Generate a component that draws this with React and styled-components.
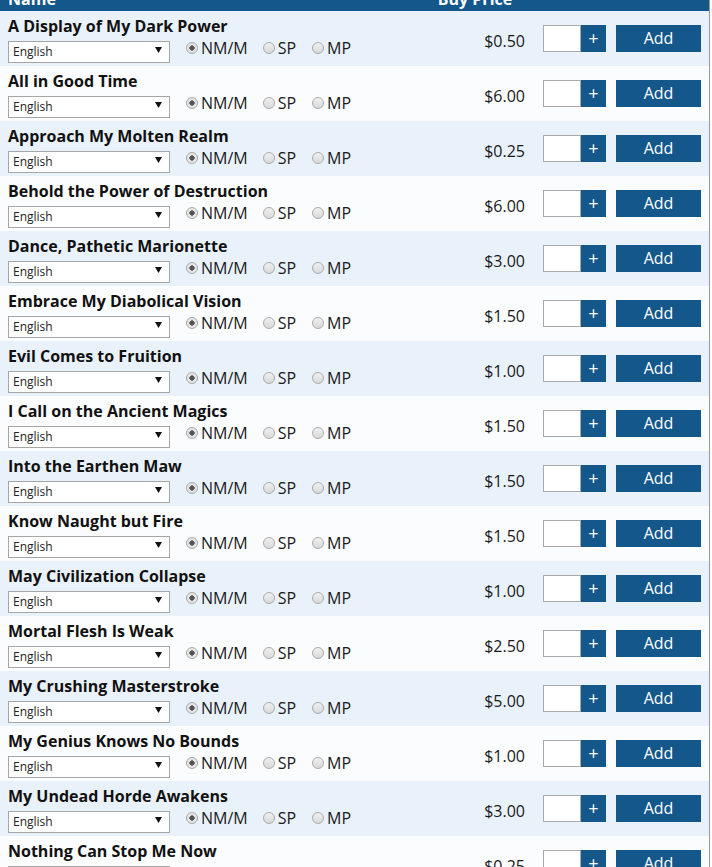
import React from "react"
import styled, { createGlobalStyle } from "styled-components"

const GlobalStyle = createGlobalStyle`
  html, body {
    margin: 0;
    padding: 0;
    overflow: hidden;
    background: #ffffff;
  }
  body {
    font-family: "Open Sans", "Liberation Sans", Arial, sans-serif;
    color: #1a1a1a;
  }
`

const blue = "#14578a"
const columns = "1fr 100px 81px 95px"

const cards = [
  ["A Display of My Dark Power", "$0.50"],
  ["All in Good Time", "$6.00"],
  ["Approach My Molten Realm", "$0.25"],
  ["Behold the Power of Destruction", "$6.00"],
  ["Dance, Pathetic Marionette", "$3.00"],
  ["Embrace My Diabolical Vision", "$1.50"],
  ["Evil Comes to Fruition", "$1.00"],
  ["I Call on the Ancient Magics", "$1.50"],
  ["Into the Earthen Maw", "$1.50"],
  ["Know Naught but Fire", "$1.50"],
  ["May Civilization Collapse", "$1.00"],
  ["Mortal Flesh Is Weak", "$2.50"],
  ["My Crushing Masterstroke", "$5.00"],
  ["My Genius Knows No Bounds", "$1.00"],
  ["My Undead Horde Awakens", "$3.00"],
  ["Nothing Can Stop Me Now", "$0.25"],
]

const Table = styled.div`
  width: 709px;
  border-right: 1px solid #9a9a9a;
`

const HeaderBar = styled.div`
  display: grid;
  grid-template-columns: ${columns};
  height: 11px;
  overflow: hidden;
  padding: 0 8px;
  background: ${blue};
`

const HeaderCell = styled.div`
  margin-top: -12px;
  font-size: 16px;
  line-height: 22px;
  font-weight: 700;
  color: #ffffff;
  text-align: ${p => (p.center ? "center" : "left")};
  white-space: nowrap;
`

const Row = styled.div`
  display: grid;
  grid-template-columns: ${columns};
  align-items: center;
  height: 55px;
  box-sizing: border-box;
  padding: 0 8px;
  background: ${p => (p.alt ? "#fafcfe" : "#e9f1fa")};
`

const NameCell = styled.div`
  display: flex;
  flex-direction: column;
  align-self: start;
  padding-top: 4px;
`

const Title = styled.div`
  font-size: 16px;
  line-height: 22px;
  font-weight: 700;
  color: #111111;
  white-space: nowrap;
`

const Options = styled.div`
  display: flex;
  align-items: flex-start;
  margin-top: 2px;
`

const SelectWrap = styled.div`
  position: relative;
  width: 162px;
  height: 22px;
  margin-right: 16px;
`

const LangSelect = styled.select`
  appearance: none;
  width: 100%;
  height: 100%;
  box-sizing: border-box;
  border: 1px solid #a6a6a6;
  border-radius: 0;
  background: #ffffff;
  padding: 0 0 0 4px;
  font-family: "Open Sans", "Liberation Sans", Arial, sans-serif;
  font-size: 12px;
  color: #222222;
  outline: none;
`

const Arrow = styled.svg`
  position: absolute;
  right: 8px;
  top: 8px;
  pointer-events: none;
`

const RadioLabel = styled.label`
  display: flex;
  align-items: center;
  height: 18px;
  margin-right: ${p => p.gap}px;
  font-size: 16px;
  line-height: 18px;
  color: #1a1a1a;
  white-space: nowrap;
`

const Radio = styled.input`
  appearance: none;
  width: 12px;
  height: 12px;
  margin: 0 3px 0 0;
  border: 1px solid #ababab;
  border-radius: 50%;
  box-sizing: border-box;
  background: ${p =>
    p.checked
      ? "radial-gradient(circle, #555555 0 2.4px, #e4e4e4 2.9px)"
      : "linear-gradient(#f0f0f0, #d9d9d9)"};
`

const Price = styled.div`
  font-size: 16px;
  line-height: 22px;
  text-align: right;
  color: #1a1a1a;
  padding-top: 4px;
`

const QtyGroup = styled.div`
  display: flex;
  justify-self: end;
  height: 27px;
`

const QtyInput = styled.input`
  width: 38px;
  height: 27px;
  box-sizing: border-box;
  border: 1px solid #a9a9a9;
  border-radius: 0;
  background: #ffffff;
  margin: 0;
  padding: 0;
  outline: none;
`

const BlueButton = styled.button`
  justify-self: end;
  width: ${p => p.w}px;
  height: 27px;
  border: none;
  border-radius: 0;
  margin: 0;
  padding: 0 0 2px;
  background: ${blue};
  color: #ffffff;
  font-family: "Open Sans", "Liberation Sans", Arial, sans-serif;
  font-size: ${p => (p.big ? 18 : 16)}px;
  line-height: 20px;
  cursor: pointer;
`

function CardRow({ name, price, alt, index }) {
  const group = "cond-" + index
  return (
    <Row alt={alt}>
      <NameCell>
        <Title>{name}</Title>
        <Options>
          <SelectWrap>
            <LangSelect defaultValue="English">
              <option>English</option>
              <option>Japanese</option>
            </LangSelect>
            <Arrow width="7" height="6" viewBox="0 0 7 6">
              <path d="M0 0 L7 0 L3.5 6 Z" fill="#111" />
            </Arrow>
          </SelectWrap>
          <RadioLabel gap={15}>
            <Radio type="radio" name={group} checked readOnly />
            NM/M
          </RadioLabel>
          <RadioLabel gap={16}>
            <Radio type="radio" name={group} checked={false} readOnly />
            SP
          </RadioLabel>
          <RadioLabel gap={0}>
            <Radio type="radio" name={group} checked={false} readOnly />
            MP
          </RadioLabel>
        </Options>
      </NameCell>
      <Price>{price}</Price>
      <QtyGroup>
        <QtyInput type="text" />
        <BlueButton w={25} big>+</BlueButton>
      </QtyGroup>
      <BlueButton w={85}>Add</BlueButton>
    </Row>
  )
}

export default function App() {
  return (
    <>
      <GlobalStyle />
      <Table>
        <HeaderBar>
          <HeaderCell>Name</HeaderCell>
          <HeaderCell center>Buy Price</HeaderCell>
          <HeaderCell />
          <HeaderCell />
        </HeaderBar>
        {cards.map(([name, price], i) => (
          <CardRow key={name} name={name} price={price} alt={i % 2 === 1} index={i} />
        ))}
      </Table>
    </>
  )
}
